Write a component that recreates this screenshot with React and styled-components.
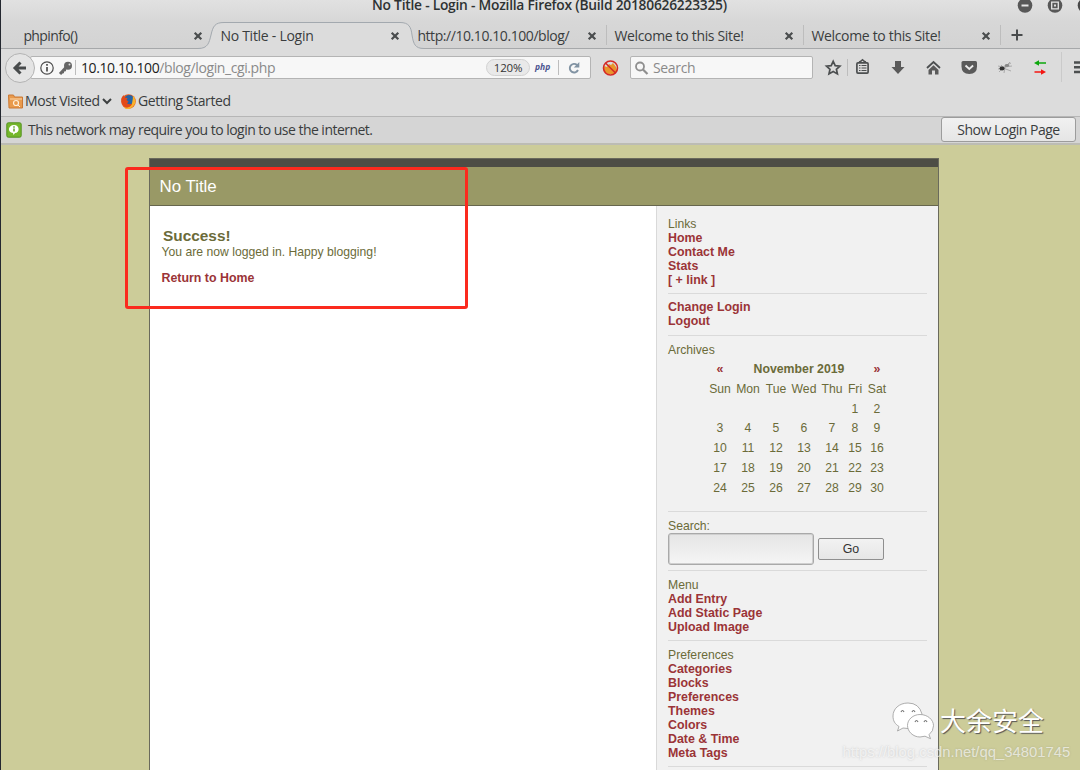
import React from "react";
import styled, { createGlobalStyle } from "styled-components";

const Global = createGlobalStyle`
  * { box-sizing: border-box; }
  html, body { margin: 0; padding: 0; overflow: hidden; }
  body { background: #cccc99; }
`;

const Desktop = styled.div`
  position: relative;
  width: 1080px;
  height: 770px;
  overflow: hidden;
  display: flex;
  flex-direction: column;
  background: #cccc99;
  border-left: 1px solid #23272f;
`;

/* Browser chrome */
const Label = styled.span`
  font: 400 ${(p) => p.$size || 14}px/20px "Open Sans", "Noto Sans", sans-serif;
  letter-spacing: ${(p) => p.$track || 0}px;
  color: ${(p) => p.$color || "#3a3d3e"};
  white-space: nowrap;
`;

const Chrome = styled.header`
  flex: none;
  display: flex;
  flex-direction: column;
  background: #dcdcdc;
`;

const TitleBar = styled.div`
  display: flex;
  height: 22px;
  align-items: flex-start;
  background: linear-gradient(#e1e1e1, #d7d7d7);
`;

const WindowTitle = styled.h1`
  flex: none;
  width: 357px;
  margin: -3px 0 0 371px;
  font: 600 13.8px/16px "Open Sans", "Noto Sans", sans-serif;
  letter-spacing: ${(p) => p.$track}px;
  color: #2e3233;
  white-space: nowrap;
`;

const WindowButtons = styled.div`
  display: flex;
  flex: none;
  gap: 14px;
  margin: -3px 0 0 287.5px;
`;

const TabStrip = styled.div`
  position: relative;
  display: flex;
  height: 27px;
  padding-left: 14px;
  background: linear-gradient(#d7d7d7, #d3d3d3);
  border-bottom: 1px solid #a6a8aa;
`;

const TabShape = styled.svg`
  position: absolute;
  left: 194px;
  top: -1px;
`;

const Tab = styled.div`
  position: relative;
  display: flex;
  flex: none;
  align-items: center;
  justify-content: space-between;
  width: 197px;
  height: 27px;
  padding: 0 9px 0 8.4px;
`;

const Divider = styled.span`
  flex: none;
  width: 1px;
  height: ${(p) => p.$h || 20}px;
  background: ${(p) => p.$color || "#bdbdbd"};
`;

const TabEnd = styled.div`
  display: flex;
  align-items: center;
  margin-left: 11px;
`;

const TabEdge = styled(Divider)`
  position: absolute;
  right: -1px;
  top: 3px;
`;

const Toolbar = styled.div`
  display: flex;
  align-items: center;
  height: 37px;
  padding-left: 4px;
`;

const BackButton = styled.div`
  z-index: 1;
  flex: none;
  display: grid;
  place-items: center;
  width: 30px;
  height: 30px;
  border: 1px solid #b3b3b3;
  border-radius: 50%;
  background: #e4e4e4;
`;

const Field = styled.div`
  flex: none;
  display: flex;
  align-items: center;
  width: ${(p) => p.$w}px;
  height: 23px;
  border: 1px solid #b4b4b4;
  border-radius: 2px;
  background: #f7f7f7;
`;

const AddressField = styled(Field)`
  margin-left: -5px;
  padding-left: 9px;
`;

const Address = styled(Label)`
  width: 405px;
  margin-left: 5px;
  b { font-weight: 400; color: #1c1c1c; }
`;

const Zoom = styled.span`
  flex: none;
  width: 44px;
  height: 17px;
  border: 1px solid #d2d2d2;
  border-radius: 9px;
  background: #e9e9e9;
  font: 400 11.5px/15px "Open Sans", "Noto Sans", sans-serif;
  letter-spacing: -0.2px;
  text-align: center;
  color: #333;
`;

const PhpBadge = styled.span`
  flex: none;
  width: 17px;
  margin: -2px 6px 0 5px;
  font: italic 700 8.5px/12px "Open Sans", sans-serif;
  color: #4b5390;
`;

const IconRow = styled.div`
  display: flex;
  align-items: center;
  gap: ${(p) => p.$gap || 0}px;
  svg { flex: none; display: block; }
`;

const ToolbarIcons = styled.svg`
  display: block;
  margin: -2px 0 0 -1px;
`;

const Bookmarks = styled.div`
  display: flex;
  align-items: center;
  height: 30px;
  padding-left: 7px;
`;

const Bookmark = styled.div`
  display: flex;
  align-items: center;
  width: ${(p) => p.$w}px;
  gap: 2px;
`;

const Notice = styled.div`
  display: flex;
  align-items: center;
  height: 29px;
  padding: 0 4px 1px 5px;
  background: #d5d5d5;
  border-top: 1px solid #b6b6b6;
  border-bottom: 2px solid #bcbcb4;
`;

const NoticeText = styled(Label)`
  flex: 1;
  margin-left: 6px;
`;

const NoticeButton = styled.button`
  width: 135px;
  height: 25px;
  padding: 0;
  border: 1px solid #9c9c9c;
  border-radius: 3px;
  background: linear-gradient(#f1f1f1, #e5e5e5);
`;

/* Blog page */
const Page = styled.main`
  flex: 1;
  width: 790px;
  margin: 13px 0 0 148px;
  display: flex;
  flex-direction: column;
  border: 1px solid #6a6a5c;
  border-bottom: 0;
  font: 400 12.2px/14px "Liberation Sans", Arial, sans-serif;
  color: #6b6b39;
`;

const Banner = styled.div`
  flex: none;
  height: 47px;
  padding-left: 9.5px;
  border-top: 8px solid #4d4d45;
  border-bottom: 1px solid #66664d;
  background: #999966;
  font-size: 16.9px;
  line-height: 39px;
  color: #fff;
`;

const Columns = styled.div`
  flex: 1;
  display: flex;
  min-height: 0;
`;

const Content = styled.section`
  width: 506px;
  padding: 21px 11.5px;
  background: #fff;
  h2 {
    margin: 0 0 0 1.5px;
    font-size: 15.4px;
    line-height: 18px;
  }
  p { margin: 0 0 12px; }
`;

const Link = styled.a`
  display: block;
  font-size: 12.4px;
  font-weight: 700;
  color: #9b3437;
  white-space: nowrap;
`;

const Sidebar = styled.aside`
  flex: 1;
  padding: 11px 11px 0;
  border-left: 1px solid #d9d9d9;
  background: #f1f1f1;
`;

const Block = styled.div`
  height: ${(p) => (p.$h ? p.$h + "px" : "auto")};
  padding-bottom: ${(p) => p.$below || 6}px;
  margin-bottom: ${(p) => p.$gap || 7}px;
  border-bottom: 1px solid #dadada;
`;

const Calendar = styled.div`
  display: grid;
  grid-template-columns: repeat(5, 28px) 18px 26px;
  grid-auto-rows: 19.75px;
  width: 184px;
  margin: 3.2px 0 0 38px;
  line-height: 19.75px;
  text-align: center;
`;

const Month = styled.b`
  grid-column: span 5;
  font-size: 12.3px;
`;

const Day = styled.span`
  display: flex;
  justify-content: center;
  white-space: nowrap;
`;

const SearchForm = styled.div`
  display: flex;
  align-items: center;
  gap: 4px;
`;

const SearchInput = styled.input`
  width: 146px;
  height: 32px;
  border: 1px solid #a9a9a9;
  border-radius: 3px;
  box-shadow: inset 0 0 0 1px #cfcfcf;
  background: linear-gradient(#e5e5e5, #f5f5f5);
`;

const GoButton = styled.button`
  width: 66px;
  height: 22px;
  padding: 0;
  border: 1px solid #8f8f8f;
  border-radius: 2px;
  background: linear-gradient(#f2f2f2, #e6e6e6);
  font: 400 12.4px/18px "Liberation Sans", Arial, sans-serif;
  color: #333;
`;

/* Overlays */
const Highlight = styled.div`
  position: absolute;
  left: 124px;
  top: 167px;
  width: 343px;
  height: 142px;
  border: 3px solid #fb2a1e;
  border-radius: 3px;
`;

const Brand = styled.div`
  position: absolute;
  left: 890px;
  top: 700px;
  display: flex;
  align-items: center;
  gap: 4px;
  font: 400 26px/40px "Noto Sans CJK SC", sans-serif;
  color: #fff;
  text-shadow: 1px 1px 1px #555;
`;

const SourceUrl = styled.div`
  position: absolute;
  left: 841.5px;
  top: 742px;
  font: 400 14.85px/20px "Liberation Sans", Arial, sans-serif;
  color: rgba(255, 255, 255, 0.65);
  text-shadow: 0 0 2px rgba(120, 120, 120, 0.35);
  white-space: nowrap;
`;

const Close = () => (
  <svg width="10" height="10" viewBox="0 0 10 10" stroke="#4a4d4e" strokeWidth="2.2">
    <path d="M1.7 1.7 8.3 8.3M8.3 1.7 1.7 8.3" />
  </svg>
);

const tabs = [
  { text: "phpinfo()", track: -0.6 },
  { text: "No Title - Login", track: -0.27 },
  { text: "http://10.10.10.100/blog/", track: -0.43 },
  { text: "Welcome to this Site!", track: -0.33 },
  { text: "Welcome to this Site!", track: -0.33 },
];

const weeks = [
  "Sun", "Mon", "Tue", "Wed", "Thu", "Fri", "Sat",
  "", "", "", "", "",
  ...Array.from({ length: 30 }, (_, i) => i + 1),
];

const Links = ({ items }) => items.map((t) => <Link key={t}>{t}</Link>);

export default function App() {
  return (
    <Desktop>
      <Global />
      <Chrome>
        <TitleBar>
          <WindowTitle $track={-0.24}>No Title - Login - Mozilla Firefox (Build 20180626223325)</WindowTitle>
          <WindowButtons>
            <svg width="16" height="16" viewBox="0 0 16 16"><circle cx="8" cy="8.5" r="7.3" fill="#585858" /><path d="M4.5 8.5h7" stroke="#e5e5e5" strokeWidth="2" /></svg>
            <svg width="16" height="16" viewBox="0 0 16 16"><circle cx="8" cy="8.5" r="7.3" fill="#585858" /><path d="M4.7 5.2h6.6v6.6H4.7z" stroke="#e5e5e5" strokeWidth="1.3" fill="none" /><path d="M7 7.5h2v2H7z" fill="#ddd" /></svg>
            <svg width="16" height="16" viewBox="0 0 16 16"><circle cx="8" cy="8.5" r="7.3" fill="#484848" /></svg>
          </WindowButtons>
        </TitleBar>
        <TabStrip>
          <TabShape width="232" height="28" viewBox="0 0 232 28">
            <path d="M3 27.5C13 27.5 14 22 16 14 18 5 20 1.5 29 1.5H205C214 1.5 216 6 217 14 218.5 23 220 27.5 229 27.5V28H3Z" fill="#dcdcdc" />
            <path d="M3 27.5C13 27.5 14 22 16 14 18 5 20 1.5 29 1.5H205C214 1.5 216 6 217 14 218.5 23 220 27.5 229 27.5" fill="none" stroke="#a3a9af" />
          </TabShape>
          {tabs.map((t, i) => (
            <Tab key={i}>
              <Label $track={t.track}>{t.text}</Label>
              <Close />
              {i > 1 && <TabEdge />}
            </Tab>
          ))}
          <TabEnd>
            <svg width="12" height="12" viewBox="0 0 12 12" stroke="#484b4c" strokeWidth="2"><path d="M6 .5v11M.5 6h11" /></svg>
          </TabEnd>
        </TabStrip>
        <Toolbar>
          <BackButton>
            <svg width="16" height="16" viewBox="0 0 16 16" fill="none" stroke="#484b4c" strokeWidth="3"><path d="M8.5 2.5 3 8l5.5 5.5M3.500 8H14" /></svg>
          </BackButton>
          <AddressField $w={561}>
            <IconRow $gap={2.5}>
              <svg width="14" height="14" viewBox="0 0 14 14"><circle cx="7" cy="7" r="6.2" fill="none" stroke="#4c4c4c" strokeWidth="1.2" /><path d="M7 3v1.8M7 6v4.6" stroke="#4c4c4c" strokeWidth="1.7" /></svg>
              <svg width="16" height="14" viewBox="0 0 16 14"><circle cx="11" cy="4.7" r="4" fill="#666" /><path d="M9 6.5 3 13" stroke="#666" strokeWidth="3" /><path d="M5 11.500H7M7 9.500H9" stroke="#666" strokeWidth="1.5" /><circle cx="12.5" cy="3.4" r="1" fill="#ddd" /></svg>
              <Divider $h={15} />
            </IconRow>
            <Address $track={-0.4} $color="#8a8a8a"><b>10.10.10.100</b>/blog/login_cgi.php</Address>
            <Zoom>120%</Zoom>
            <PhpBadge>php</PhpBadge>
            <Divider $h={15} />
            <svg width="30" height="14" viewBox="0 0 30 14"><path d="M18 4A4.300 4.300 0 1 0 19 9" fill="none" stroke="#8193a3" strokeWidth="1.9" /><path d="M20.3 1v5.5h-5.500z" fill="#8193a3" /></svg>
          </AddressField>
          <IconRow>
            <svg width="39" height="18" viewBox="0 0 39 18"><path d="M13 7l3 1 2-3 2 1 2-2 3 4 1 4-3 3h-6l-4-2z" fill="#e8952c" /><circle cx="19.500" cy="9" r="7" fill="none" stroke="#d52a25" strokeWidth="1.6" /><path d="M14.500 4l10 10" stroke="#d52a25" strokeWidth="1.6" /></svg>
          </IconRow>
          <Field $w={183}>
            <svg width="22" height="16" viewBox="0 0 22 16" fill="none" stroke="#8f8f8f" strokeWidth="1.8"><circle cx="9" cy="6.5" r="4" /><path d="M12 9.5l4.500 4.500" strokeWidth="2.2" /></svg>
            <Label $track={-0.35} $color="#8a8a8a">Search</Label>
          </Field>
          <ToolbarIcons width="268" height="32" viewBox="812 51 268 32" fill="none" stroke="#4c4f50">
            <path d="M833.2 61.3l2 4.300 4.700.5-3.500 3.200 1 4.600-4.200-2.400-4.200 2.400 1-4.600-3.500-3.200 4.700-.5z" strokeWidth="1.7" />
            <path d="M847.5 59v17" stroke="#bdbdbd" />
            <rect x="856.9" y="62.9" width="11.2" height="10.2" rx="1" strokeWidth="1.7" />
            <path d="M859 62l1.500-.5 2-1.800 2 1.800 1.500.5" strokeWidth="1.5" />
            <path d="M859 65.5h1.500M861.500 65.500h5M859 68h1.500M861.500 68h5M859 70.500h1.500M861.500 70.500h5" strokeWidth="1.1" />
            <path d="M895 61h6v6h3.500l-6.500 7-6.500-7h3.500z" fill="#5a5a5a" stroke="none" />
            <path d="M927 68l6.500-6 6.500 6" strokeWidth="1.8" />
            <path d="M928.500 70l5-4.700 5 4.700v4.500h-3.500v-4h-3v4h-3.500z" fill="#5a5a5a" stroke="none" />
            <path d="M963 61h12.500q1.500 0 1.500 1.500v4q0 7.500-7.700 7.500t-7.800-7.500v-4q0-1.500 1.500-1.500z" fill="#5a5a5a" stroke="none" />
            <path d="M965.500 65.500l3.800 3.500 3.800-3.500" stroke="#ececec" strokeWidth="1.9" />
            <g strokeWidth=".6" stroke="#888"><path d="M998 66l5 1 8-4M999 72l4-4 8 3M1001 65l3 3 6-6M1004 73l1-6 7-1M998 69l6-1" /><ellipse cx="1002" cy="68.500" rx="2.500" ry="2" fill="#333" stroke="none" /><ellipse cx="1007" cy="65.500" rx="2.200" ry="1.400" fill="#888" stroke="none" /></g>
            <path d="M1037 63h9" stroke="#0da80d" strokeWidth="1.5" /><path d="M1034 63l5-2.800v5.600z" fill="#0da80d" stroke="none" />
            <path d="M1034.500 72h8" stroke="#f41612" strokeWidth="1.5" /><path d="M1046 72l-5-2.800v5.600z" fill="#f41612" stroke="none" />
            <path d="M1061.500 52v30" stroke="#cacaca" />
            <path d="M1074 62.500h9M1074 67.200h9M1074 72h9" strokeWidth="2.6" />
          </ToolbarIcons>
        </Toolbar>
        <Bookmarks>
          <Bookmark $w={113}>
            <svg width="15" height="15" viewBox="0 0 15 15"><path d="M.5 1h5l1 2h8v11H1z" fill="#e99a4c" stroke="#ca7934" /><path d="M2 5h12" stroke="#fbd8ad" /><circle cx="8" cy="9" r="2.500" fill="none" stroke="#fff0da" strokeWidth="1.2" /><path d="M10 11l2 2" stroke="#fff0da" /></svg>
            <Label $track={-0.43}>Most Visited</Label>
            <svg width="10" height="8" viewBox="0 0 10 8" fill="none" stroke="#3d4041" strokeWidth="2"><path d="M1 2l4 4 4-4" /></svg>
          </Bookmark>
          <Bookmark $w={130}>
            <svg width="15" height="15" viewBox="0 0 15 15"><circle cx="7.500" cy="7.500" r="7.300" fill="#e55b1d" /><circle cx="8.200" cy="6" r="5" fill="#2564a6" /><path d="M12 1.500q5 6 0 11t-9 1q7 .5 8-4t1-8z" fill="#f9b22b" /><path d="M.5 4l2-3 1 2.500 3 .5-1 2 2 1.500-1.500 2q3 1.500 5 0-1.500 4-5.500 4Q-.5 11 .5 4z" fill="#e34a18" /></svg>
            <Label $track={-0.43}>Getting Started</Label>
          </Bookmark>
        </Bookmarks>
        <Notice>
          <svg width="16" height="16" viewBox="0 0 16 16"><rect x=".8" y=".8" width="14.400" height="14.400" rx="1.500" fill="#75b72b" stroke="#549222" /><path d="M8 3c6 0 6 8 1 8l-1.500 2L7 11C1 10.500 2 3 8 3z" fill="#fff" /><path d="M8 4.300v1.400M8 6.500v3" stroke="#64a626" strokeWidth="1.5" /></svg>
          <NoticeText $track={-0.53}>This network may require you to login to use the internet.</NoticeText>
          <NoticeButton><Label $track={-0.5}>Show Login Page</Label></NoticeButton>
        </Notice>
      </Chrome>
      <Page>
        <Banner>No Title</Banner>
        <Columns>
          <Content>
            <h2>Success!</h2>
            <p>You are now logged in. Happy blogging!</p>
            <Link>Return to Home</Link>
          </Content>
          <Sidebar>
            <Block $gap={6}>Links<Links items={["Home", "Contact Me", "Stats", "[ + link ]"]} /></Block>
            <Block $below={7}><Links items={["Change Login", "Logout"]} /></Block>
            <Block $h={169}>
              Archives
              <Calendar>
                <Link>«</Link><Month>November 2019</Month><Link>»</Link>
                {weeks.map((d, i) => <Day key={i}>{d}</Day>)}
              </Calendar>
            </Block>
            <Block $h={52}>
              Search:
              <SearchForm><SearchInput /><GoButton>Go</GoButton></SearchForm>
            </Block>
            <Block>Menu<Links items={["Add Entry", "Add Static Page", "Upload Image"]} /></Block>
            <Block>Preferences<Links items={["Categories", "Blocks", "Preferences", "Themes", "Colors", "Date & Time", "Meta Tags"]} /></Block>
          </Sidebar>
        </Columns>
      </Page>
      <Highlight />
      <Brand>
        <svg width="45" height="40" viewBox="0 0 45 40">
          <g fill="#fff" stroke="#999" strokeWidth=".8">
            <path d="M17 3C8 3 2 9 2 16c0 5 2 8 6 10.500L6.500 31l5.500-3q11 2 17-3.500Q32 20 31 14 28 3 17 3z" />
            <path d="M29 14.500c-7 0-12.500 5-12.500 11S22 37 29 37l5-.8 5.500 2.500-1.500-4q4.500-3.500 4.500-9c0-6-6-11.200-13.500-11.200z" />
          </g>
          <g fill="none" stroke="#777" strokeWidth="1.2"><path d="M10 12q1.500-3 3 0M21 12q1.500-3 3 0M24 22q1.500-3 3 0M33 22q1.500-3 3 0" /></g>
        </svg>
        大余安全
      </Brand>
      <SourceUrl>https://blog.csdn.net/qq_34801745</SourceUrl>
    </Desktop>
  );
}
